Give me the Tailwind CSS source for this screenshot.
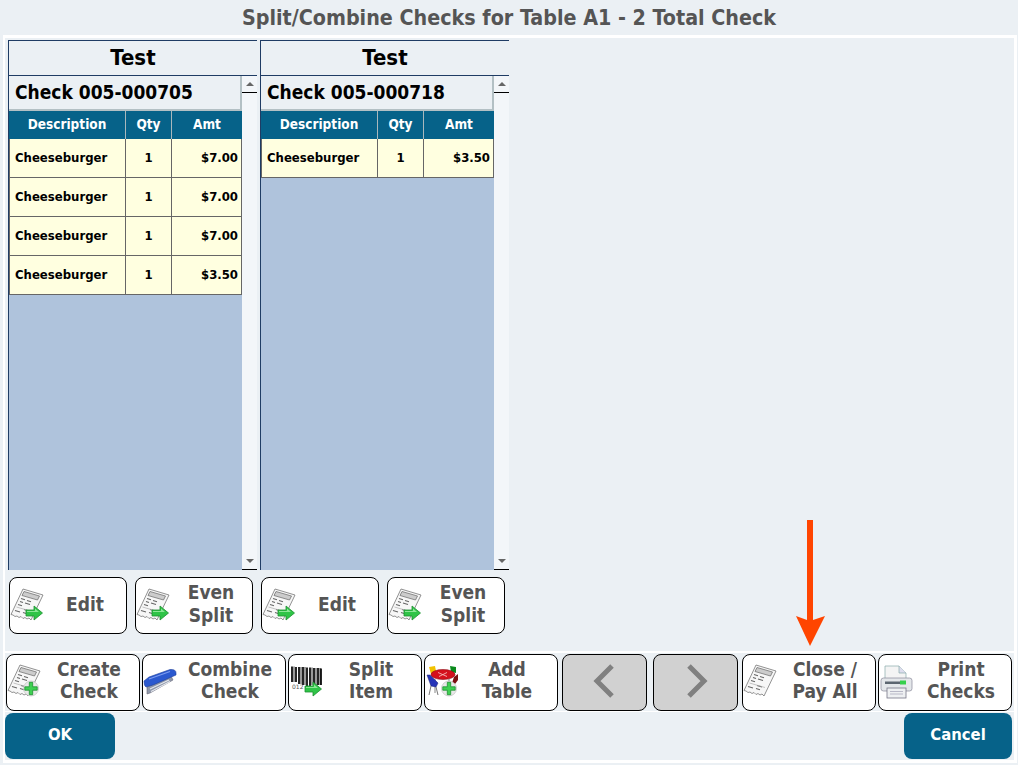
<!DOCTYPE html>
<html lang="en">
<head>
  <meta charset="UTF-8" />
  <title>Split/Combine Checks</title>
  <script src="https://cdn.jsdelivr.net/npm/@tailwindcss/browser@4"></script>
</head>
<body class="bg-[#ebf0f4] font-['DejaVu_Sans_Condensed','DejaVu_Sans',sans-serif] font-bold overflow-hidden">

  <!-- shared icons -->
  <svg width="0" height="0" class="absolute">
    <defs>
      <symbol id="receipt" viewBox="0 0 40 40">
        <path d="M13 3 L33 9 L21 34 L19 32 L17 33 L15 31.500 L13 32.500 L11 30.500 L9 31.500 L7 30 L5 30.500 L3 29 L1 28.500 Z" fill="#f7f7f7" stroke="#777" stroke-width="0.8"/>
        <path d="M14 5.500 L29.500 10 L27.500 14 L12 9.500 Z" fill="#ccc" stroke="#666" stroke-width="0.7"/>
        <path d="M11 12.500 L15 13.700 M17 14.500 L21 15.700 M10 15.500 L13 16.500 M15 17 L20 18.500 M8 18.500 L12 19.700 M5 24.500 L10 26 M13 26.500 L17 27.700 M14 23.500 L19 25" stroke="#666" stroke-width="1.100" fill="none"/>
        <path d="M6.500 21 L22 25.500" stroke="#aaa" stroke-width="0.7"/>
      </symbol>
      <symbol id="green-arrow" viewBox="0 0 40 40">
        <path d="M16 24 H24 V20 L32.500 27 L24 34 V30 H16 Z" fill="#2fc447" stroke="#1d9130" stroke-width="0.8"/>
        <path d="M17 25 H25 V22.500 L29 26 H17 Z" fill="#8be795"/>
      </symbol>
      <symbol id="green-plus" viewBox="0 0 40 40">
        <circle cx="24" cy="26.500" r="7.500" fill="#e8e8e8" stroke="#bbb" stroke-width="0.6"/>
        <path d="M22.300 20.300 H25.700 V24.800 H30.200 V28.200 H25.700 V32.700 H22.300 V28.200 H17.800 V24.800 H22.300 Z" fill="#3fd052" stroke="#1d9130" stroke-width="0.8"/>
      </symbol>
    </defs>
  </svg>

  <div class="h-[35px] flex items-center justify-center text-[#555] text-[21.3px] leading-none">Split/Combine Checks for Table A1 - 2 Total Check</div>

  <div class="ml-[3px] w-[1014px] h-[728px] border-l-[2px] border-r-[3px] border-t-[3px] border-b-[3px] border-white flex flex-col">

    <!-- check columns -->
    <div class="h-[615px] pl-[3px] pt-[2px] border-b-[2px] border-white">
      <div class="flex gap-[3px]">

        <!-- column 1 -->
        <div class="w-[249px]">
          <div class="border-l border-t border-[#1f3c64]">
            <div class="h-[35px] pb-[2px] flex items-center justify-center text-[22px] text-black border-b border-[#1f3c64]">Test</div>
            <div class="flex h-[494px]">
              <div class="w-[233px] bg-[#afc3dc]">
                <div class="h-[35px] w-[233px] bg-[#ebf0f4] border-b-2 border-r-2 border-[#b3c0c4] flex items-center pl-[6px] text-[19px] text-black">Check 005-000705</div>
                <div class="flex h-[28px] pb-[0px] text-white text-[13.500px] bg-[#a9b8bc] gap-[1px]">
                  <div class="w-[116px] bg-[#066289] flex items-center justify-center pb-[2px]">Description</div>
                  <div class="w-[45px] bg-[#066289] flex items-center justify-center pb-[2px]">Qty</div>
                  <div class="w-[70px] bg-[#066289] flex items-center justify-center pb-[2px]">Amt</div>
                </div>
                <div class="flex h-[39px] text-[13px] text-black bg-[#ffffe0] border-b border-l border-[#666]">
                  <div class="w-[116px] border-r border-[#666] flex items-center pl-[5px]">Cheeseburger</div>
                  <div class="w-[46px] border-r border-[#666] flex items-center justify-center">1</div>
                  <div class="w-[70px] flex items-center justify-end pr-[3px] border-r border-[#666]">$7.00</div>
                </div>
                <div class="flex h-[39px] text-[13px] text-black bg-[#ffffe0] border-b border-l border-[#666]">
                  <div class="w-[116px] border-r border-[#666] flex items-center pl-[5px]">Cheeseburger</div>
                  <div class="w-[46px] border-r border-[#666] flex items-center justify-center">1</div>
                  <div class="w-[70px] flex items-center justify-end pr-[3px] border-r border-[#666]">$7.00</div>
                </div>
                <div class="flex h-[39px] text-[13px] text-black bg-[#ffffe0] border-b border-l border-[#666]">
                  <div class="w-[116px] border-r border-[#666] flex items-center pl-[5px]">Cheeseburger</div>
                  <div class="w-[46px] border-r border-[#666] flex items-center justify-center">1</div>
                  <div class="w-[70px] flex items-center justify-end pr-[3px] border-r border-[#666]">$7.00</div>
                </div>
                <div class="flex h-[39px] text-[13px] text-black bg-[#ffffe0] border-b border-l border-[#666]">
                  <div class="w-[116px] border-r border-[#666] flex items-center pl-[5px]">Cheeseburger</div>
                  <div class="w-[46px] border-r border-[#666] flex items-center justify-center">1</div>
                  <div class="w-[70px] flex items-center justify-end pr-[3px] border-r border-[#666]">$3.50</div>
                </div>
              </div>
              <div class="w-[15px] bg-[#f3f6f9] flex flex-col justify-between">
                <div class="h-[17px] border-b border-black flex items-center justify-center"><div class="w-0 h-0 border-x-[4px] border-x-transparent border-b-[4px] border-b-[#666]"></div></div>
                <div class="h-[17px] border-b border-black flex items-center justify-center"><div class="w-0 h-0 border-x-[4px] border-x-transparent border-t-[4px] border-t-[#666]"></div></div>
              </div>
            </div>
          </div>
          <div class="flex gap-[8px] pt-[7px] pl-[1px] text-[19px] text-[#555] leading-[23px]">
            <button class="w-[118px] h-[57px] bg-white border border-black rounded-lg flex items-center">
              <svg class="shrink-0 -mr-[6px]" width="40" height="40"><use href="#receipt"/><use href="#green-arrow"/></svg>
              <span class="flex-1 text-center pb-[3px]">Edit</span>
            </button>
            <button class="w-[118px] h-[57px] bg-white border border-black rounded-lg flex items-center">
              <svg class="shrink-0 -mr-[6px]" width="40" height="40"><use href="#receipt"/><use href="#green-arrow"/></svg>
              <span class="flex-1 text-center pb-[3px]">Even<br>Split</span>
            </button>
          </div>
        </div>

        <!-- column 2 -->
        <div class="w-[249px]">
          <div class="border-l border-t border-[#1f3c64]">
            <div class="h-[35px] pb-[2px] flex items-center justify-center text-[22px] text-black border-b border-[#1f3c64]">Test</div>
            <div class="flex h-[494px]">
              <div class="w-[233px] bg-[#afc3dc]">
                <div class="h-[35px] w-[233px] bg-[#ebf0f4] border-b-2 border-r-2 border-[#b3c0c4] flex items-center pl-[6px] text-[19px] text-black">Check 005-000718</div>
                <div class="flex h-[28px] text-white text-[13.500px] bg-[#a9b8bc] gap-[1px]">
                  <div class="w-[116px] bg-[#066289] flex items-center justify-center pb-[2px]">Description</div>
                  <div class="w-[45px] bg-[#066289] flex items-center justify-center pb-[2px]">Qty</div>
                  <div class="w-[70px] bg-[#066289] flex items-center justify-center pb-[2px]">Amt</div>
                </div>
                <div class="flex h-[39px] text-[13px] text-black bg-[#ffffe0] border-b border-l border-[#666]">
                  <div class="w-[116px] border-r border-[#666] flex items-center pl-[5px]">Cheeseburger</div>
                  <div class="w-[46px] border-r border-[#666] flex items-center justify-center">1</div>
                  <div class="w-[70px] flex items-center justify-end pr-[3px] border-r border-[#666]">$3.50</div>
                </div>
              </div>
              <div class="w-[15px] bg-[#f3f6f9] flex flex-col justify-between">
                <div class="h-[17px] border-b border-black flex items-center justify-center"><div class="w-0 h-0 border-x-[4px] border-x-transparent border-b-[4px] border-b-[#666]"></div></div>
                <div class="h-[17px] border-b border-black flex items-center justify-center"><div class="w-0 h-0 border-x-[4px] border-x-transparent border-t-[4px] border-t-[#666]"></div></div>
              </div>
            </div>
          </div>
          <div class="flex gap-[8px] pt-[7px] pl-[1px] text-[19px] text-[#555] leading-[23px]">
            <button class="w-[118px] h-[57px] bg-white border border-black rounded-lg flex items-center">
              <svg class="shrink-0 -mr-[6px]" width="40" height="40"><use href="#receipt"/><use href="#green-arrow"/></svg>
              <span class="flex-1 text-center pb-[3px]">Edit</span>
            </button>
            <button class="w-[118px] h-[57px] bg-white border border-black rounded-lg flex items-center">
              <svg class="shrink-0 -mr-[6px]" width="40" height="40"><use href="#receipt"/><use href="#green-arrow"/></svg>
              <span class="flex-1 text-center pb-[3px]">Even<br>Split</span>
            </button>
          </div>
        </div>
      </div>
    </div>

    <!-- action buttons -->
    <div class="h-[59px] pl-[1px] flex items-center border-b border-white text-[19px] text-[#555] leading-[22px]">
      <button class="w-[134px] h-[57px] bg-white border border-black rounded-lg flex items-center">
        <svg class="shrink-0 -mr-[8px]" width="40" height="40"><use href="#receipt"/><use href="#green-plus"/></svg>
        <span class="flex-1 text-center pb-[4px]">Create<br>Check</span>
      </button>
      <button class="ml-[2px] w-[144px] h-[57px] bg-white border border-black rounded-lg flex items-center">
        <svg class="shrink-0 -mr-[8px]" width="40" height="40" viewBox="0 0 40 40">
          <path d="M4 25 L28 14 L30 18 L7 31 L4 32 Z" fill="#8f98aa" stroke="#667" stroke-width="0.6"/>
          <path d="M7 27 L26 18 M8 29.500 L27 19.500" stroke="#e6e9ef" stroke-width="1.100"/>
          <path d="M1 19 L6 15 L27 7.500 Q33 7 33 11 L33 13 L10 23 L3 25 Q1 24 1 19 Z" fill="#2b59cf" stroke="#1f3f9c" stroke-width="0.6"/>
          <path d="M6 17 L27 9.500" stroke="#7d9df0" stroke-width="1.200" fill="none"/>
        </svg>
        <span class="flex-1 text-center pb-[4px]">Combine<br>Check</span>
      </button>
      <button class="ml-[2px] w-[134px] h-[57px] bg-white border border-black rounded-lg flex items-center">
        <svg class="shrink-0 -mr-[8px]" width="40" height="40" viewBox="0 0 40 40">
          <path d="M3 4.500 V20 M7 5 V20 M10 5 V22 M14 5 V23 M18 5.500 V24 M21 5.500 V24 M25 6 V23 M29 6 V23 M32 6.500 V23" stroke="#000" stroke-width="1.700"/>
          <path d="M5 4.500 V20 M12 5 V22 M16 5 V23 M23 5.500 V23 M27 6 V23 M31 6 V23" stroke="#000" stroke-width="0.800"/>
          <text x="3" y="27" font-size="6" font-family="DejaVu Sans" fill="#555" font-weight="400">012</text>
          <use href="#green-arrow"/>
        </svg>
        <span class="flex-1 text-center pb-[4px]">Split<br>Item</span>
      </button>
      <button class="ml-[2px] w-[134px] h-[57px] bg-white border border-black rounded-lg flex items-center">
        <svg class="shrink-0 -mr-[8px]" width="40" height="40" viewBox="0 0 40 40">
          <path d="M4 5 L10 4 L11 9 L6 12 Z" fill="#f2c200"/>
          <path d="M25 4 L31 5 L31 11 L26 10 Z" fill="#0a8a1c"/>
          <path d="M29 15 L33 12 L33 18 L30 22 L27 21 Z" fill="#7c1010"/>
          <path d="M10 17 V31 M24 17 V25" stroke="#888" stroke-width="1"/>
          <ellipse cx="18" cy="12.500" rx="12" ry="5" fill="#d4101c" stroke="#8c0a12" stroke-width="0.6"/>
          <path d="M13 10.500 L22 14.500 M22 10.500 L14 14.500" stroke="#f5b8b8" stroke-width="0.9"/>
          <path d="M2 13 L5 13 L13 21 L11 25 L6 24 Z" fill="#2634b8" stroke="#161f70" stroke-width="0.5"/>
          <path d="M6 24 L4 33 M11 25 L13 33" stroke="#777" stroke-width="1"/>
          <use href="#green-plus"/>
        </svg>
        <span class="flex-1 text-center pb-[4px]">Add<br>Table</span>
      </button>
      <button class="ml-[4px] w-[85px] h-[57px] pb-[2px] bg-[#d1d1d1] border border-black rounded-lg flex items-center justify-center">
        <svg width="24" height="36" viewBox="0 0 24 36" fill="none" stroke="#808080" stroke-width="5"><path d="M19 3 L4 18 L19 33"/></svg>
      </button>
      <button class="ml-[6px] w-[85px] h-[57px] pb-[2px] bg-[#d1d1d1] border border-black rounded-lg flex items-center justify-center">
        <svg width="24" height="36" viewBox="0 0 24 36" fill="none" stroke="#808080" stroke-width="5"><path d="M5 3 L20 18 L5 33"/></svg>
      </button>
      <button class="ml-[4px] w-[134px] h-[57px] bg-white border border-black rounded-lg flex items-center">
        <svg class="shrink-0 -mr-[8px]" width="40" height="40"><use href="#receipt"/></svg>
        <span class="flex-1 text-center pb-[4px]">Close /<br>Pay All</span>
      </button>
      <button class="ml-[2px] w-[134px] h-[57px] bg-white border border-black rounded-lg flex items-center">
        <svg class="shrink-0 -mr-[8px]" width="40" height="40" viewBox="0 0 40 40">
          <path d="M6 4 H20 L27 11 V17 H6 Z" fill="#f4f4f4" stroke="#8aa" stroke-width="0.7"/>
          <path d="M20 4 V11 H27" fill="#dde" stroke="#8aa" stroke-width="0.7"/>
          <rect x="2" y="16" width="31" height="13" rx="2.500" fill="#e4e7ea" stroke="#889" stroke-width="0.7"/>
          <rect x="6" y="19.500" width="21" height="2.500" fill="#5c6670"/>
          <rect x="21" y="18.500" width="6" height="4" fill="#35d04c"/>
          <rect x="8" y="26" width="19" height="10" fill="#eef0f2" stroke="#778" stroke-width="0.8"/>
          <path d="M11 29.500 H24 M11 32 H24" stroke="#aab" stroke-width="0.8"/>
        </svg>
        <span class="flex-1 text-center pb-[4px]">Print<br>Checks</span>
      </button>
    </div>

    <!-- footer -->
    <div class="flex-1 flex items-start justify-between pt-[1px] pr-[2px] text-white text-[16.500px]">
      <button class="w-[110px] h-[46px] pb-[2px] bg-[#066289] rounded-lg">OK</button>
      <button class="w-[108px] h-[46px] pb-[2px] bg-[#066289] rounded-lg">Cancel</button>
    </div>
  </div>

  <!-- callout arrow drawn over the page -->
  <svg class="absolute left-[790px] top-[515px]" width="40" height="135" viewBox="0 0 40 135">
    <path d="M17 5 H23 L23 105 L35 101 L20 131 L6 101 L17 105 Z" fill="#ff4500"/>
  </svg>
</body>
</html>
